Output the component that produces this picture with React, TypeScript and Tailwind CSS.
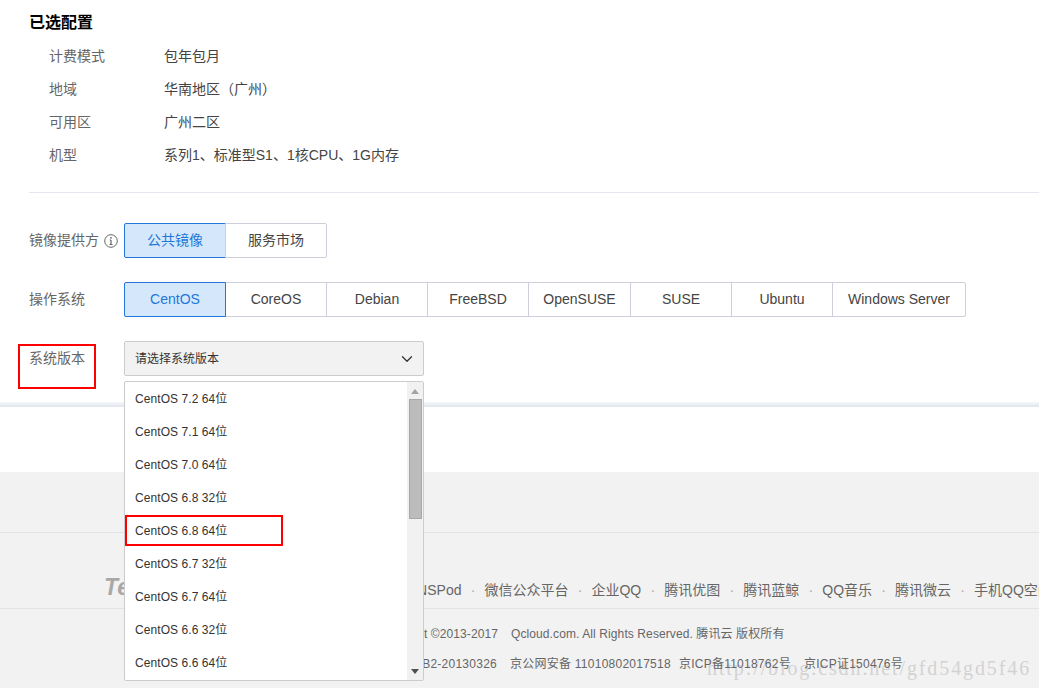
import { ChevronDown } from "lucide-react";

const configRows = [
  { label: "计费模式", value: "包年包月" },
  { label: "地域", value: "华南地区（广州）" },
  { label: "可用区", value: "广州二区" },
  { label: "机型", value: "系列1、标准型S1、1核CPU、1G内存" },
];

const systems = [
  { name: "CentOS", width: "w-[102px]" },
  { name: "CoreOS", width: "w-[102px]" },
  { name: "Debian", width: "w-[102px]" },
  { name: "FreeBSD", width: "w-[102px]" },
  { name: "OpenSUSE", width: "w-[103px]" },
  { name: "SUSE", width: "w-[102px]" },
  { name: "Ubuntu", width: "w-[102px]" },
  { name: "Windows Server", width: "w-[134px]" },
];

const versions = [
  "CentOS 7.2 64位",
  "CentOS 7.1 64位",
  "CentOS 7.0 64位",
  "CentOS 6.8 32位",
  "CentOS 6.8 64位",
  "CentOS 6.7 32位",
  "CentOS 6.7 64位",
  "CentOS 6.6 32位",
  "CentOS 6.6 64位",
];

const footerLinks = ["DNSPod", "微信公众平台", "企业QQ", "腾讯优图", "腾讯蓝鲸", "QQ音乐", "腾讯微云", "手机QQ空间"];

export default function App() {
  return (
    <div
      className="relative h-[688px] w-[1039px] overflow-hidden bg-white text-[14px] text-[#444]"
      style={{ fontFamily: '"Liberation Sans", "Noto Sans CJK SC", sans-serif' }}
    >
      {/* Selected config */}
      <div className="h-[402px] pl-[29px]">
        <h2 className="pt-[11px] text-[16px] leading-[24px] font-bold text-black">已选配置</h2>
        <div className="mt-[5px] flex flex-col pl-[20px]">
          {configRows.map((row) => (
            <div key={row.label} className="flex h-[33px] items-center">
              <span className="w-[115px] text-[#666]">{row.label}</span>
              <span>{row.value}</span>
            </div>
          ))}
        </div>
        <div className="mt-[20px] h-px bg-[#e5e8ef]" />

        {/* Image provider */}
        <div className="mt-[30px] flex items-center">
          <div className="flex w-[95px] items-center text-[#666]">
            <span>镜像提供方</span>
            <svg viewBox="0 0 14 14" className="ml-[5px] h-[14px] w-[14px]" fill="none" stroke="#666">
              <circle cx="7" cy="7" r="6.3" />
              <path d="M7 6v4.5M5.5 10.5h3M5.8 6H7" strokeWidth="1.2" />
              <circle cx="7" cy="3.8" r="0.9" fill="#666" stroke="none" />
            </svg>
          </div>
          <div className="flex h-[35px]">
            <div className="flex w-[102px] items-center justify-center rounded-l-[2px] border border-[#2277da] bg-[#d5e7fa] text-[#2277da]">
              公共镜像
            </div>
            <div className="-ml-px flex w-[102px] items-center justify-center rounded-r-[2px] border border-[#cdd0dc]">
              服务市场
            </div>
          </div>
        </div>

        {/* OS */}
        <div className="mt-[24px] flex items-center">
          <span className="w-[95px] text-[#666]">操作系统</span>
          <div className="flex h-[35px]">
            {systems.map((s, i) => (
              <div
                key={s.name}
                className={
                  i === 0
                    ? `${s.width} relative z-10 flex items-center justify-center rounded-l-[2px] border border-[#2277da] bg-[#d5e7fa] text-[#2277da]`
                    : `${s.width} -ml-px flex items-center justify-center border border-[#cdd0dc] ${i === systems.length - 1 ? "rounded-r-[2px]" : ""}`
                }
              >
                {s.name}
              </div>
            ))}
          </div>
        </div>

        {/* Version */}
        <div className="mt-[24px] flex">
          <span className="w-[95px] pt-[8px] leading-[19px] text-[#666]">系统版本</span>
          <div className="relative z-20 w-[300px]">
            <div className="flex h-[35px] items-center justify-between rounded-[2px] border border-[#ccc] bg-[#f2f2f2] pr-[7px] pl-[10px] text-[12px] text-[#333]">
              <span>请选择系统版本</span>
              <ChevronDown size={18} strokeWidth={1.7} color="#333" />
            </div>
            <div className="absolute top-[40px] left-0 flex h-[300px] w-[300px] rounded-[2px] border border-[#ccc] bg-white text-[12px] tracking-[0.07px] text-[#333]">
              <ul className="relative flex-1">
                {versions.map((v) => (
                  <li key={v} className="flex h-[33px] items-center pl-[10px]">
                    {v}
                  </li>
                ))}
                <div className="absolute top-[133px] left-0 h-[31px] w-[158px] border-2 border-[#f00]" />
              </ul>
              <div className="flex w-[16px] flex-col items-center bg-[#f1f1f1]">
                <div className="mt-[7px] h-0 w-0 border-x-[4px] border-b-[5px] border-x-transparent border-b-[#a3a3a3]" />
                <div className="mt-[5px] h-[120px] w-[13px] border border-[#a8a8a8] bg-[#bcbcbc]" />
                <div className="mt-auto mb-[6px] h-0 w-0 border-x-[4px] border-t-[5px] border-x-transparent border-t-[#505050]" />
              </div>
            </div>
          </div>
        </div>
      </div>

      {/* Shadow under the panel */}
      <div className="h-[5px] bg-gradient-to-b from-[#f6f8fa] to-[#dfe5ec]" />
      <div className="h-[65px]" />

      {/* Footer */}
      <div className="h-[216px] bg-[#f2f2f2] text-[#666]">
        <div className="h-[61px] border-b border-[#e3e3e8]" />
        <div className="flex h-[76px] items-center overflow-hidden border-b border-[#e3e3e8] pt-[40px]">
          <span className="mb-[6px] w-[407px] shrink-0 pl-[104px] text-[23px] leading-none font-bold text-[#a8a8a8] italic">
            Tencent
          </span>
          <div className="flex shrink-0 items-center whitespace-nowrap">
            {footerLinks.map((link, i) => (
              <div key={link} className="flex items-center">
                {i > 0 && <span className="w-[23px] text-center text-[#aaa]">·</span>}
                <span>{link}</span>
              </div>
            ))}
          </div>
        </div>

        {/* Image watermark, under the footer text */}
        <span
          className="absolute top-[656px] left-[707px] text-[20px] leading-[24px] tracking-[1.9px] whitespace-nowrap text-[#d2d2d2]"
          style={{ fontFamily: '"Liberation Serif", serif' }}
        >
          http://blog.csdn.net/gfd54gd5f46
        </span>

        <div className="mt-[15px] flex text-[12px] leading-[20px] tracking-[0.1px]">
          <span className="w-[498px] text-right">Copyright ©2013-2017</span>
          <span className="ml-[13px]">Qcloud.com. All Rights Reserved. 腾讯云 版权所有</span>
        </div>
        <div className="relative mt-[10px] flex text-[12px] leading-[20px] tracking-[0.25px] whitespace-nowrap">
          <span className="w-[497px] text-right">B2-20130326</span>
          <span className="ml-[13px]">京公网安备 11010802017518</span>
          <span className="ml-[8px]">京ICP备11018762号</span>
          <span className="ml-[13px]">京ICP证150476号</span>
        </div>
      </div>

      {/* Annotation around the label */}
      <div className="absolute top-[344px] left-[18px] h-[45px] w-[78px] border-2 border-[#f00]" />
    </div>
  );
}
